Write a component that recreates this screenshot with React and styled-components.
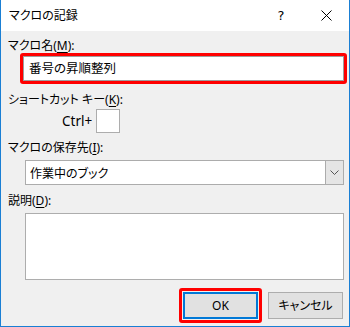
import React from "react";
import styled, { createGlobalStyle } from "styled-components";

const Global = createGlobalStyle`
  html, body { margin: 0; padding: 0; background: #f0f0f0; }
  body {
    font-family: "Noto Sans", "Noto Sans CJK JP", sans-serif;
    font-feature-settings: "palt";
  }
  * { box-sizing: border-box; }
`;

const Window = styled.div`
  width: 350px;
  height: 327px;
  background: #f0f0f0;
  border: 1px solid #1a7fd4;
  border-top: none;
  display: flex;
  flex-direction: column;
  font-size: 12px;
  color: #000;
`;

const TitleBar = styled.div`
  height: 31px;
  background: #fff;
  display: flex;
  align-items: center;
  padding-left: 8px;
  flex-shrink: 0;
`;

const Title = styled.div`
  flex: 1;
  font-size: 12px;
  line-height: 14px;
  margin-top: 1px;
`;

const TitleButton = styled.div`
  width: ${(p) => (p.$close ? 45 : 46)}px;
  height: 31px;
  display: flex;
  align-items: center;
  justify-content: center;
  font-size: 13px;
  font-family: "DejaVu Sans", sans-serif;
`;

const Body = styled.div`
  display: flex;
  flex-direction: column;
  padding: 8px 6px 0 7px;
  flex: 1;
`;

const Label = styled.div`
  line-height: 14px;
  height: 14px;
  margin-top: ${(p) => p.$mt || 0}px;
  white-space: nowrap;
  u { text-decoration-thickness: 1px; text-underline-offset: 2px; }
`;

const Highlight = styled.div`
  border: 3px solid #ff0000;
  border-radius: 3px;
  margin-left: ${(p) => p.$ml || 0}px;
  width: ${(p) => p.$w}px;
  height: ${(p) => p.$h}px;
  display: flex;
`;

const TextBox = styled.div`
  flex: 1;
  background: #fff;
  border: 1px solid #9e9e9e;
  display: flex;
  align-items: center;
  padding-left: 5px;
  line-height: 14px;
  font-size: 12.5px;
`;

const CtrlRow = styled.div`
  display: flex;
  align-items: center;
  gap: 4px;
  margin-left: 54px;
  margin-top: 2px;
  height: 24px;
`;

const CtrlText = styled.span`
  font-size: 13.5px;
  line-height: 16px;
`;

const KeyBox = styled.div`
  width: 24px;
  height: 24px;
  background: #fff;
  border: 1px solid #adadad;
`;

const Select = styled.div`
  margin-left: 17px;
  margin-top: 5px;
  width: 319px;
  height: 25px;
  background: #fff;
  border: 1px solid #acacac;
  display: flex;
  align-items: stretch;
`;

const SelectText = styled.div`
  flex: 1;
  display: flex;
  align-items: center;
  padding-left: 4px;
`;

const DropButton = styled.div`
  width: 18px;
  background: #e5e5e5;
  border-left: 1px solid #acacac;
  display: flex;
  align-items: center;
  justify-content: center;
`;

const TextArea = styled.div`
  margin-left: 17px;
  margin-top: 5px;
  width: 319px;
  height: 67px;
  background: #fff;
  border: 1px solid #adadad;
`;

const ButtonRow = styled.div`
  display: flex;
  justify-content: flex-end;
  align-items: center;
  gap: 6px;
  margin-top: 8px;
`;

const Button = styled.div`
  width: ${(p) => (p.$inner ? "100%" : "75px")};
  height: ${(p) => (p.$inner ? "100%" : "27px")};
  background: #e1e1e1;
  border: ${(p) => (p.$default ? "2px solid #0078d7" : "1px solid #adadad")};
  display: flex;
  align-items: center;
  justify-content: center;
  line-height: 14px;
  font-size: 12px;
`;

const OkWrap = styled.div`
  border: 3px solid #ff0000;
  border-radius: 3px;
  padding: 1px;
  width: 83px;
  height: 35px;
  display: flex;
`;

export default function App() {
  return (
    <>
      <Global />
      <Window>
        <TitleBar>
          <Title>マクロの記録</Title>
          <TitleButton>?</TitleButton>
          <TitleButton $close>
            <svg width="11" height="11" viewBox="0 0 11 11">
              <path d="M0.5 0.5 L10.5 10.5 M10.5 0.5 L0.5 10.5" stroke="#000" strokeWidth="1" fill="none" />
            </svg>
          </TitleButton>
        </TitleBar>
        <Body>
          <Label>
            マクロ名(<u>M</u>):
          </Label>
          <Highlight $ml={12} $w={327} $h={31}>
            <TextBox>番号の昇順整列</TextBox>
          </Highlight>
          <Label $mt={9}>
            ショートカット キー(<u>K</u>):
          </Label>
          <CtrlRow>
            <CtrlText>Ctrl+</CtrlText>
            <KeyBox />
          </CtrlRow>
          <Label $mt={8}>
            マクロの保存先(<u>I</u>):
          </Label>
          <Select>
            <SelectText>作業中のブック</SelectText>
            <DropButton>
              <svg width="9" height="5" viewBox="0 0 9 5">
                <path d="M0.5 0.5 L4.5 4.5 L8.5 0.5" stroke="#555" strokeWidth="1" fill="none" />
              </svg>
            </DropButton>
          </Select>
          <Label $mt={9}>
            説明(<u>D</u>):
          </Label>
          <TextArea />
          <ButtonRow>
            <OkWrap>
              <Button $default $inner>OK</Button>
            </OkWrap>
            <Button>キャンセル</Button>
          </ButtonRow>
        </Body>
      </Window>
    </>
  );
}
